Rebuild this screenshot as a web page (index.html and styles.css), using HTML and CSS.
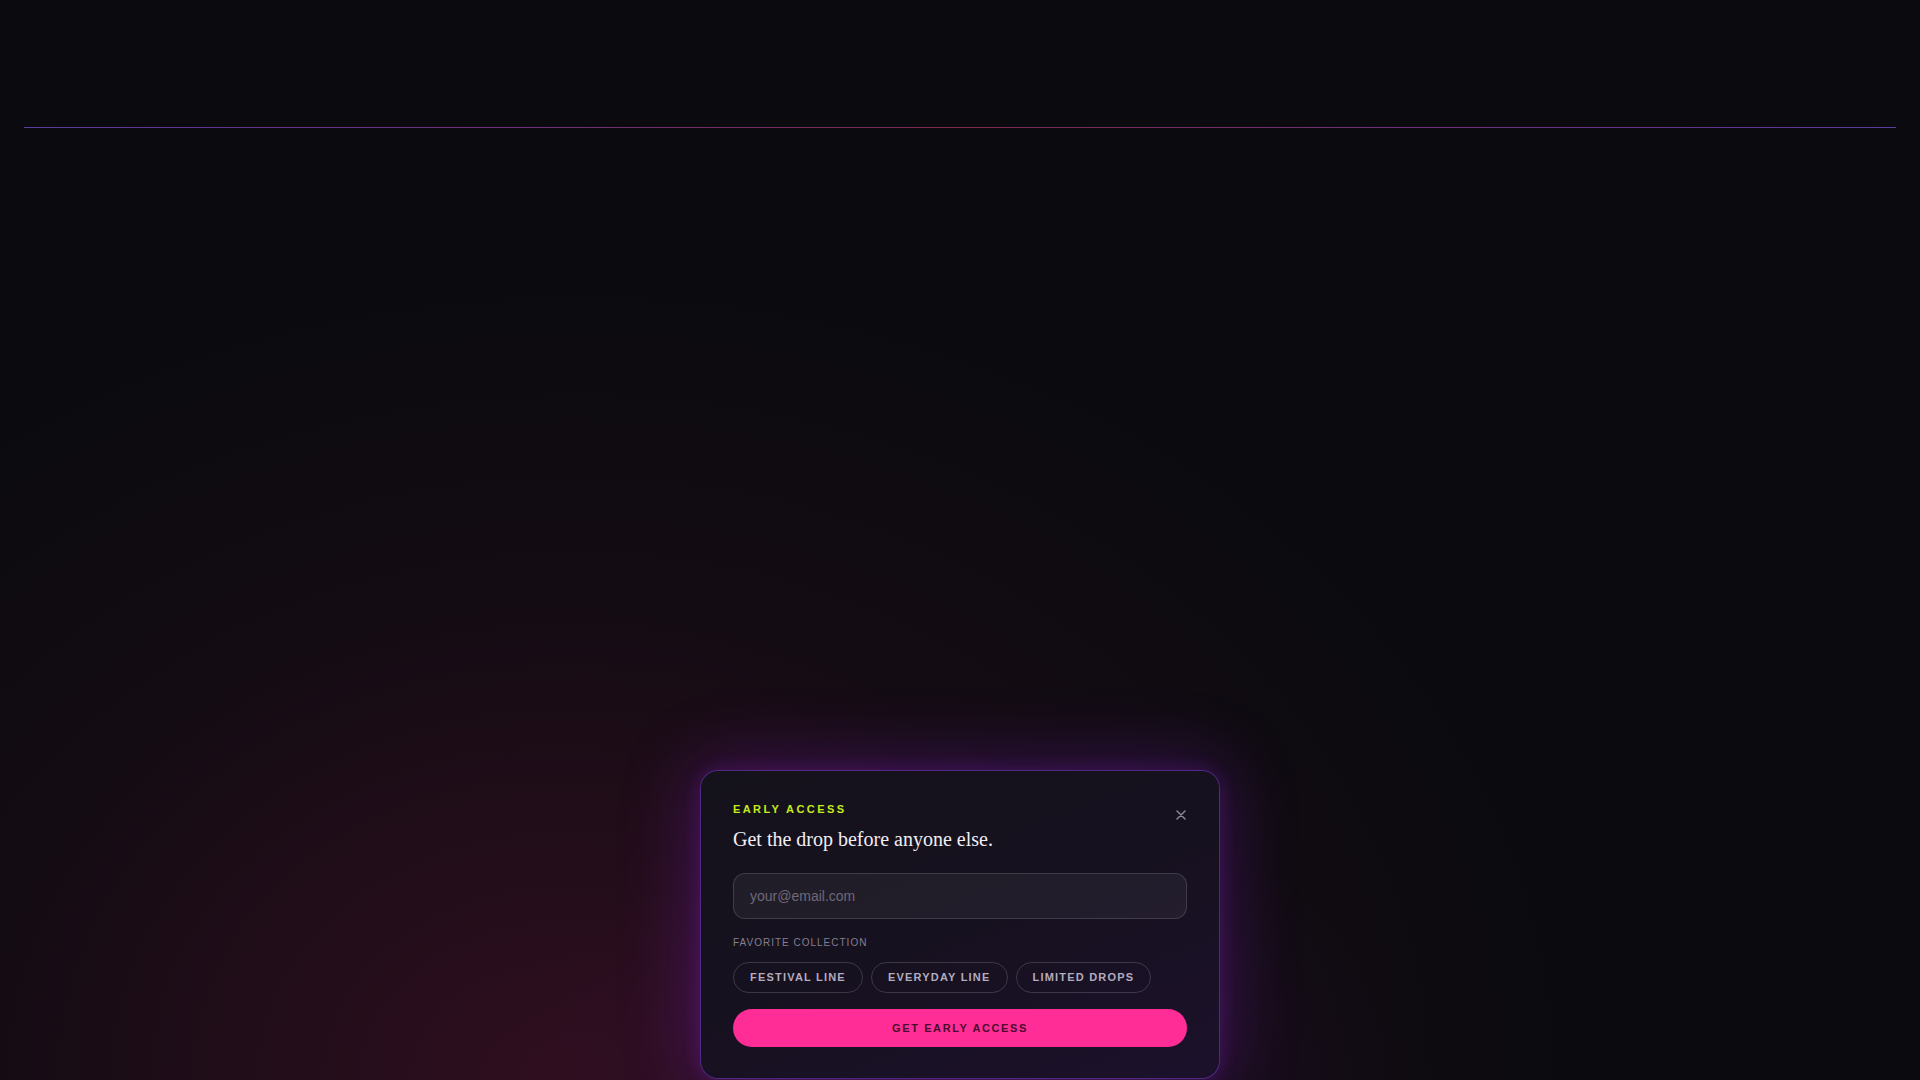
FILE: index.html
```html
<!DOCTYPE html>
<html lang="en">
<head>
<meta charset="utf-8">
<title>Early Access</title>
<link rel="stylesheet" href="styles.css">
</head>
<body>
  <header class="topbar"></header>
  <main class="stage">
    <section class="card">
      <button class="close" aria-label="Close">
        <svg width="10" height="10" viewBox="0 0 10 10"><path d="M1 1 L9 9 M9 1 L1 9" stroke="#8d869a" stroke-width="1.5" stroke-linecap="round"/></svg>
      </button>
      <div class="eyebrow">EARLY ACCESS</div>
      <h2 class="title">Get the drop before anyone else.</h2>
      <input class="email" type="email" placeholder="your@email.com">
      <div class="label">FAVORITE COLLECTION</div>
      <div class="chips">
        <span class="chip">FESTIVAL LINE</span>
        <span class="chip">EVERYDAY LINE</span>
        <span class="chip">LIMITED DROPS</span>
      </div>
      <button class="cta">GET EARLY ACCESS</button>
    </section>
  </main>
</body>
</html>
```

FILE: styles.css
```css
* { box-sizing: border-box; }
html, body { height: 100%; }
body {
  margin: 0;
  height: 1080px;
  padding: 0 24px;
  display: flex;
  flex-direction: column;
  overflow: hidden;
  font-family: "Liberation Sans", Arial, sans-serif;
  background:
    radial-gradient(ellipse 1250px 1000px at 30% 100%, rgba(90, 18, 52, 0.30), rgba(90, 18, 52, 0.12) 45%, rgba(90, 18, 52, 0) 80%),
    radial-gradient(ellipse 700px 600px at 28% 100%, rgba(105, 20, 55, 0.18), rgba(105, 20, 55, 0) 80%),
    radial-gradient(ellipse 600px 380px at 50% 100%, rgba(120, 30, 170, 0.14), rgba(120, 30, 170, 0) 75%),
    #0b0b0f;
}
.topbar {
  height: 128px;
  flex: none;
  border-bottom: 1px solid transparent;
  border-image: linear-gradient(90deg, #5a3b9e, #6e2f7c 25%, #7a2a4c 50%, #6e2f7c 75%, #5a3b9e) 1;
}
.stage {
  flex: 1;
  display: flex;
  justify-content: center;
  align-items: flex-end;
  padding-bottom: 1px;
}
.card {
  position: relative;
  width: 520px;
  padding: 31px 32px 31px;
  border-radius: 18px;
  border: 1px solid rgba(128, 60, 210, 0.55);
  background: linear-gradient(160deg, #14121b 0%, #16111f 50%, #1c112b 100%);
  box-shadow: 0 0 70px 8px rgba(130, 35, 200, 0.32), 0 0 18px rgba(130, 35, 200, 0.25);
  display: flex;
  flex-direction: column;
}
.close {
  position: absolute;
  top: 32px;
  right: 26px;
  width: 24px;
  height: 24px;
  padding: 0;
  border: 0;
  background: none;
  display: flex;
  align-items: center;
  justify-content: center;
}
.eyebrow {
  font-size: 11px;
  line-height: 14px;
  font-weight: 700;
  letter-spacing: 2.4px;
  color: #c6ec1c;
}
.title {
  margin: 12px 0 0;
  font-family: "Liberation Serif", "Times New Roman", serif;
  font-weight: 400;
  font-size: 20px;
  line-height: 22px;
  color: #f1eef4;
}
.email {
  margin-top: 23px;
  height: 46px;
  width: 100%;
  padding: 0 16px;
  border-radius: 12px;
  border: 1px solid rgba(255, 255, 255, 0.14);
  background: rgba(255, 255, 255, 0.05);
  font-family: "Liberation Sans", Arial, sans-serif;
  font-size: 14px;
  color: #e8e4ee;
  outline: none;
}
.email::placeholder { color: #6e6878; }
.label {
  margin-top: 18px;
  font-size: 10px;
  line-height: 12px;
  letter-spacing: 1px;
  color: #857e90;
}
.chips {
  margin-top: 13px;
  display: flex;
  gap: 8px;
}
.chip {
  padding: 8px 16px;
  line-height: 13px;
  font-size: 11px;
  font-weight: 700;
  letter-spacing: 1.2px;
  color: #b3abbf;
  border: 1px solid rgba(255, 255, 255, 0.16);
  border-radius: 999px;
}
.cta {
  margin-top: 16px;
  height: 38px;
  width: 100%;
  border: 0;
  border-radius: 19px;
  background: #ff2d95;
  font-family: "Liberation Sans", Arial, sans-serif;
  font-size: 11px;
  font-weight: 700;
  letter-spacing: 1.6px;
  color: #4a0b2f;
}
```
